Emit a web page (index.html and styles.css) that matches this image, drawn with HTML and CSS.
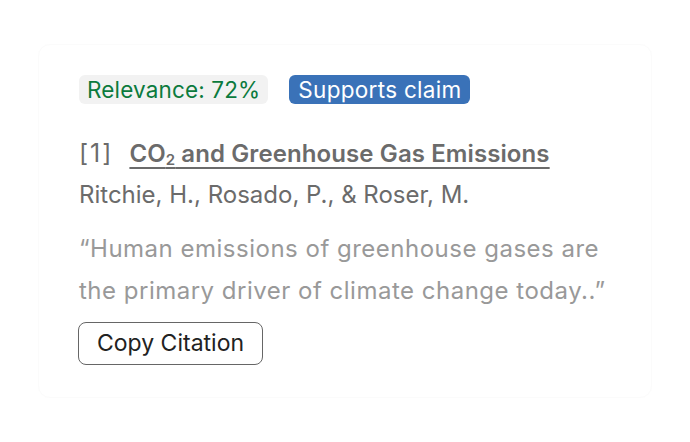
FILE: index.html
```html
<!DOCTYPE html>
<html>
<head>
<meta charset="utf-8">
<link rel="stylesheet" href="styles.css">
</head>
<body>
<div class="card">
  <div class="badges">
    <span class="badge relevance">Relevance: 72%</span>
    <span class="badge supports">Supports claim</span>
  </div>
  <div class="title-row">
    <span class="num">[1]</span>
    <a class="title">CO<sub>2</sub> and Greenhouse Gas Emissions</a>
  </div>
  <div class="authors">Ritchie, H., Rosado, P., &amp; Roser, M.</div>
  <p class="quote">“Human emissions of greenhouse gases are the primary driver of climate change today..”</p>
  <button class="copy">Copy Citation</button>
</div>
</body>
</html>
```
FILE: styles.css
```css
html, body { margin: 0; padding: 0; background: #fff; }
body {
  font-family: Inter, "Noto Sans", sans-serif;
  width: 690px;
  height: 442px;
  padding: 44px 38px;
  box-sizing: border-box;
}
.card {
  height: 354px;
  border: 1px solid #fbfbfb;
  border-radius: 12px;
  box-sizing: border-box;
  padding: 30px 40px 0 39px;
}
.badges { display: flex; gap: 21px; align-items: center; padding-left: 1px; }
.badge {
  font-size: 22.5px;
  line-height: 29px;
  padding: 0 8px;
  border-radius: 6px;
}
.relevance { background: #f2f2f2; color: #0b7a3d; letter-spacing: 0.15px; }
.supports { background: #3a72b8; color: #fff; letter-spacing: 0.3px; padding: 0 8px 0 9px; }
.title-row { margin-top: 34px; display: flex; align-items: baseline; gap: 16px; font-size: 24px; color: #6b6b6b; line-height: 30px; padding-left: 1px; }
.num { font-size: 25px; letter-spacing: 2px; }
.title { font-weight: 600; color: #6b6b6b; text-decoration: underline; text-underline-offset: 5px; text-decoration-thickness: 1.5px; letter-spacing: 0.1px; }
.title sub { font-size: 15px; vertical-align: -3px; line-height: 0; }
.authors { font-size: 24px; color: #6b6b6b; margin-top: 11px; line-height: 30px; padding-left: 1px; }
.quote { font-size: 24px; color: #999; line-height: 42px; letter-spacing: 0.5px; margin: 18px 0 0; width: 540px; padding-left: 1px; }
.copy {
  margin-top: 10px;
  font-family: inherit;
  font-size: 23px;
  color: #222;
  background: #fff;
  border: 1.5px solid #666;
  border-radius: 8px;
  padding: 6px 18px 7px;
  display: block;
}
```
